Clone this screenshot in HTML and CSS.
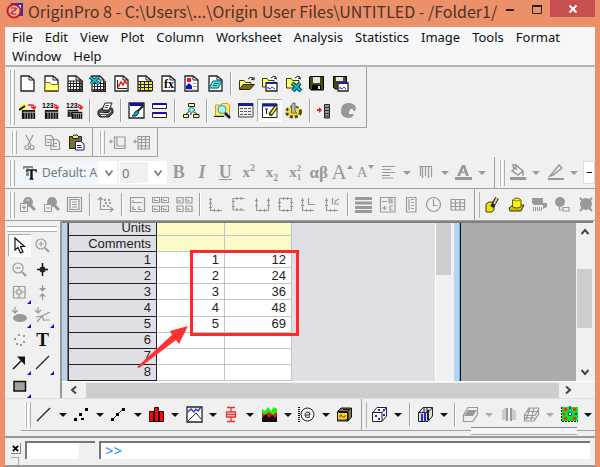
FILE: index.html
```html
<!DOCTYPE html>
<html lang="en">
<head>
<meta charset="utf-8">
<title>OriginPro 8</title>
<link rel="stylesheet" href="styles.css">
</head>
<body>
<svg class="defs" aria-hidden="true">
  <symbol id="doc" viewBox="0 0 17 17"><path class="page" d="M2 1H10L15 5V16H2Z"/><path class="ln" d="M10 1V5H15"/></symbol>
  <symbol id="grid" viewBox="0 0 17 17"><path class="page" d="M2 1H10L15 5V16H2Z"/><path class="ln" d="M10 1V5H15"/><path class="thin" d="M2 8.500H17M2 11.500H17M2 14.500H17M4.500 6V16M7.500 6V16M10.500 6V16M13.500 6V16M16.500 6V16M2 6H17M2 16.500H17"/></symbol>
  <symbol id="folderdoc" viewBox="0 0 17 17"><path class="page" d="M2 1H10L15 5V16H2Z"/><path class="ln" d="M10 1V5H15"/><path fill="#ffff80" stroke="#887000" d="M2 15.500V7.500H7L8.500 9.500H15.500V15.500Z"/></symbol>
  <symbol id="excel" viewBox="0 0 17 17"><path class="page" d="M3 1H11L15 5V16H3Z"/><path class="thin" d="M4 8.500H17M4 11.500H17M4 14.500H17M5.500 7V16M8.500 6V16M11.500 6V16M14.500 6V16M16.500 6V16M4 16.500H17M10 1V5H15"/><path stroke="#003f50" stroke-width="3.500" d="M1 2L10 9M9 2L2 9"/><path stroke="#16bcca" stroke-width="2" d="M1 2L10 9M9 2L2 9"/></symbol>
  <symbol id="graph" viewBox="0 0 17 17"><path class="page" d="M2 1H10L15 5V16H2Z"/><path class="ln" d="M10 1V5H15M4.500 5V13.500H14"/><path fill="none" stroke="#e82020" stroke-width="1.500" d="M5 12L8 7L10 10L12 6L14 9"/></symbol>
  <symbol id="matrix" viewBox="0 0 17 17"><path class="page" d="M2 1H10L15 5V16H2Z"/><path fill="#f8f020" d="M3 6H17V16H3Z"/><path class="ln" d="M10 1V5H15"/><path class="thin" d="M2 6.500H17M2 9.500H17M2 12.500H17M2 15.500H17M4.500 6V16M8.500 6V16M12.500 6V16M16.500 6V16"/></symbol>
  <symbol id="fx" viewBox="0 0 17 17"><path class="page" d="M2 1H10L15 5V16H2Z"/><path class="ln" d="M10 1V5H15"/><text x="4" y="13" font-family="Liberation Serif" font-weight="bold" font-size="12">fx</text></symbol>
  <symbol id="layout" viewBox="0 0 17 17"><path class="page" d="M2 1H10L15 5V16H2Z"/><path class="ln" d="M10 1V5H15"/><path fill="#f01818" d="M4 3H8V7H4Z"/><path fill="#1010c0" d="M3 14V11L6 8L9 11V14Z"/><path class="gray" d="M10 8.500H13M10 11.500H14M4 15H13"/></symbol>
  <symbol id="notes" viewBox="0 0 17 17"><path class="page" d="M2 1H10L15 5V16H2Z"/><path class="ln" d="M10 1V5H15"/><path fill="#60e8e8" stroke="#005860" d="M6 6H15L11 13H2Z"/><path stroke="#005860" d="M7 8.500H12M6 10.500H10"/></symbol>
  <symbol id="open" viewBox="0 0 17 17"><path fill="#ffff90" stroke="#403800" d="M1.500 14V5.500H6L7.500 7.500H13V10"/><path fill="#756c10" stroke="#302c00" d="M1.500 14.500L5 9.500H16.500L12 14.500Z"/><path class="ln" d="M10 4Q13 1 15 3V5M13 4L16 5L16 2"/></symbol>
  <symbol id="opent" viewBox="0 0 17 17"><path fill="#ffff70" stroke="#403800" d="M1.500 12V3.500H6L7.500 5.500H13V12Z"/><path class="page" d="M5 8H16V16H5Z"/><path stroke="#1820b0" stroke-width="2" d="M5 8H16"/><path fill="none" stroke="#4040c0" d="M7 14V12L9 14L11 12L14 14"/><path class="ln" d="M10 3Q13 0 15 2V4M13 3L16 4"/></symbol>
  <symbol id="openx" viewBox="0 0 17 17"><path fill="#ffff70" stroke="#403800" d="M1.500 13V3.500H6L7.500 5.500H14V13Z"/><path stroke="#003840" stroke-width="4" d="M7 8L16 16M15 8L8 16"/><path stroke="#16b8c8" stroke-width="2" d="M7 8L16 16M15 8L8 16"/><path class="ln" d="M10 3Q13 0 15 2V4M13 3L16 4"/></symbol>
  <symbol id="save" viewBox="0 0 17 17"><path fill="#4a4810" stroke="#000" d="M2 1.500H15.500V15H3L1.500 13.500V2Z"/><path fill="#e8e8e8" d="M5 2H12V8H5Z"/><path fill="#000" d="M4 10H13V15H4Z"/><path fill="#ddd" d="M10 11H12V14H10Z"/></symbol>
  <symbol id="savet" viewBox="0 0 17 17"><path fill="#4a4810" stroke="#000" d="M1.500 1.500H14.500V14H3L1.500 12.500Z"/><path fill="#e8e8e8" d="M4 2H11V6H4Z"/><path class="page" d="M6 8H16V16H6Z"/><path stroke="#2020b0" stroke-width="2" d="M6 8H16"/><path fill="none" stroke="#4040d0" d="M8 14V12L10 14L12 12L14 14"/></symbol>
  <symbol id="sheet" viewBox="0 0 17 11"><path fill="#111" d="M1 1H16V11H1Z"/><path stroke="#bbb" d="M2 3.500H16M4.500 3V11M7.500 3V11M10.500 3V11M13.500 3V11"/></symbol>
  <symbol id="wizard" viewBox="0 0 17 17"><use href="#sheet" x="2" y="7" width="15" height="10"/><path fill="#ffff40" d="M4 0L6 3L9 2L7 5L9 8L5 7L2 9L2 5L0 2L3 3Z"/><path stroke="#111" stroke-width="2" d="M0 8L6 4"/><path fill="none" stroke="#f02020" stroke-width="1.500" d="M9 3H13Q15 3 15 6M12 4.500L15 7L17 4.500"/></symbol>
  <symbol id="import" viewBox="0 0 17 17"><use href="#sheet" x="2" y="7" width="15" height="10"/><text x="0" y="6" font-family="Liberation Sans" font-weight="bold" font-size="7">123</text><path fill="none" stroke="#f02020" stroke-width="1.500" d="M12 3H13Q15 3 15 6M12 4.500L15 7L17 4.500"/></symbol>
  <symbol id="importm" viewBox="0 0 17 17"><use href="#sheet" x="1" y="7" width="12" height="8"/><use href="#sheet" x="5" y="9" width="12" height="8"/><text x="0" y="6" font-family="Liberation Sans" font-weight="bold" font-size="7">123</text><path fill="none" stroke="#f02020" stroke-width="1.500" d="M12 3H13Q15 3 15 6M12 4.500L15 7L17 4.500"/></symbol>
  <symbol id="print" viewBox="0 0 17 17"><path fill="#555" stroke="#222" d="M1 9L5 6H15L16 8V11L12 15H3L1 13Z"/><path fill="#fff" stroke="#222" d="M5 8L8 1H15L12 8Z"/><path stroke="#555" d="M8.500 3.500H12M7.500 5.500H11"/><path stroke="#ddd" d="M3 11.500H11L14 9"/><path stroke="#eee" d="M4 13.500H9"/></symbol>
  <symbol id="brush" viewBox="0 0 17 17"><path class="page" d="M1 1H16V16H1Z"/><path stroke="#1010a0" stroke-width="3" d="M2 2.500H15"/><path stroke="#222" stroke-width="2" d="M16 3L9 10"/><path fill="#20a8b8" stroke="#002830" d="M10 8Q12 12 8 14H4Q7 12 7 10Z"/></symbol>
  <symbol id="bars" viewBox="0 0 17 17"><path fill="#fff" stroke="#222" d="M1.500 1.500H15.500V6.500H1.500ZM1.500 10.500H15.500V15.500H1.500Z"/><path stroke="#1010b0" stroke-width="2" d="M2 2H15M2 11H15"/></symbol>
  <symbol id="tree" viewBox="0 0 17 17"><path class="ln" d="M8 4V8L3 12M8 8L14 12M3 12V13M8 9V13"/><path fill="#ffff60" stroke="#222" d="M5.500 1.500H11.500V4.500H5.500ZM.5 12.500H5.500V15.500H.5ZM10.500 12.500H16V15.500H10.500Z"/><path fill="#80f0f0" stroke="#188088" d="M8.500 5L12 8L8.500 11L5 8Z"/></symbol>
  <symbol id="explorer" viewBox="0 0 17 17"><path fill="#ffe860" stroke="#bfa820" d="M1.500 14V3H7L8 1.500H14L15.500 3V14Z"/><path stroke="#111" d="M0 14.500H10"/><circle cx="8" cy="7.500" r="4" fill="#9ff" stroke="#48a"/><path stroke="#101080" stroke-width="2.500" d="M11 11L16 16"/></symbol>
  <symbol id="results" viewBox="0 0 17 17"><path fill="#eee" stroke="#444" d="M1.500 1.500H16V15H1.500Z"/><path stroke="#1818a0" stroke-width="3" d="M1 2.500H16"/><path stroke="#555" stroke-dasharray="3 1" d="M3 6.500H15M3 9.500H15M3 12.500H15"/></symbol>
  <symbol id="editor" viewBox="0 0 17 17"><path fill="#fff" stroke="#222" d="M1.500 2H16V15.500H1.500Z"/><path stroke="#1818a0" stroke-width="3" d="M1 3H16"/><path class="ln" d="M4 7H7M5.500 7V12M8 13H10"/><path stroke="#222" stroke-width="4" d="M15 5L9 13"/><path stroke="#ffe020" stroke-width="2" d="M15 5L10 12"/></symbol>
  <symbol id="gear" viewBox="0 0 17 17"><ellipse cx="8.500" cy="10" rx="7" ry="5" fill="#eadc30" stroke="#554c00" stroke-width="3" stroke-dasharray="3 2"/><ellipse cx="8.500" cy="9" rx="5.500" ry="4" fill="#ece040"/><path fill="#bbb" stroke="#666" d="M6.500 11V4L8 1H10V9L12 11Z"/></symbol>
  <symbol id="addcol" viewBox="0 0 17 17"><path fill="#f02020" d="M0 7H2V5L5 8L2 11V9H0Z"/><path fill="#999" stroke="#222" d="M7.500 2.500H12.500V16H7.500Z"/><path stroke="#333" d="M7 5.500H13M7 8.500H13M7 11.500H13M7 14H13"/></symbol>
  <symbol id="refresh" viewBox="0 0 17 17"><path fill="#999" d="M9 9H15L16 6C15 2 12 1 8 1C3 1 1 5 1 9C1 14 5 16 8 16C11 16 13 15 14 12L9 12Z"/><path fill="#f0f0f0" d="M10 7H13V10H10Z"/></symbol>
  <symbol id="cut" viewBox="0 0 17 17"><path class="gray" d="M5 1L10 11M12 1L7 11"/><circle class="gray" cx="6" cy="13.500" r="2"/><circle class="gray" cx="11" cy="13.500" r="2"/></symbol>
  <symbol id="copy" viewBox="0 0 17 17"><path class="gray" d="M1.500 1.500H7L9.500 4V11.500H1.500ZM7 5.500H13L15.500 8V15.500H7ZM3 5.500H6M3 8.500H6M9 9.500H13M9 12.500H13"/></symbol>
  <symbol id="paste" viewBox="0 0 17 17"><path fill="#77722c" stroke="#222" d="M1.500 2.500H13.500V14.500H1.500Z"/><path fill="#f4e660" stroke="#222" d="M4.500 4.500V2.500L6 1H9L10.500 2.500V4.500Z"/><path fill="#fff" stroke="#181890" d="M7.500 7.500H13L16 10V16H7.500Z"/><path stroke="#181890" d="M9 11.500H13M9 13.500H14"/></symbol>
  <symbol id="addlayer" viewBox="0 0 17 17"><path class="gray" d="M0 7.500H4M2 5.500V9.500M5.500 3V14.500H16V3ZM8 3V12H16"/></symbol>
  <symbol id="addtable" viewBox="0 0 17 17"><path class="gray" d="M0 7.500H4M2 5.500V9.500M5 2.500H16.500V15H5ZM5 5.500H16M5 8.500H16M5 12H16M8.500 2V15M12.500 2V15"/></symbol>
  <symbol id="tt" viewBox="0 0 17 17"><path fill="#888" d="M2 2H12V5H11L10 4H8V12H5V4H4L3 5H2Z"/><path fill="#111" stroke="#f0f6fc" stroke-width=".6" d="M5 5H16V9H15L14 7H12V14L13 15V16H8V15L9 14V7H7L6 9H5Z"/></symbol>
  <symbol id="chev" viewBox="0 0 10 10"><path fill="none" stroke="#888" stroke-width="2" d="M1.500 2.500L5 7L8.500 2.500"/></symbol>
  <symbol id="drop" viewBox="0 0 8 8"><path fill="currentColor" d="M0 2H8L4 6Z"/></symbol>
  <symbol id="align" viewBox="0 0 17 17"><path class="gray" d="M2 2.500H15M2 5.500H11M2 8.500H15M2 11.500H10M2 14H13"/></symbol>
  <symbol id="hatch" viewBox="0 0 17 17"><path class="gray" d="M2 2.500H15M3.500 2V12M5.500 2V14M8.500 2V12M11.500 2V14M14.500 2V13"/></symbol>
  <symbol id="fontcolor" viewBox="0 0 17 17"><path fill="#999" fill-rule="evenodd" d="M0 13H17V16H0ZM7 1H10L14 12H11L10 9H6L5 12H2ZM8.500 4L7 7.500H9.500Z"/></symbol>
  <symbol id="bucket" viewBox="0 0 17 17"><path fill="#999" d="M1 13H17V16H1Z"/><path fill="none" stroke="#999" stroke-width="1.500" d="M3 7L8 2L14 7L9 11ZM5 5L4 1H7V6M14 7V12"/></symbol>
  <symbol id="pen" viewBox="0 0 17 17"><path fill="#999" d="M1 14H17V16H1Z"/><path fill="none" stroke="#999" stroke-width="1.500" d="M3 12L12 1L15 4L6 11Z"/></symbol>
  <symbol id="zoomin" viewBox="0 0 17 17"><circle cx="9" cy="6" r="5" fill="#999"/><path stroke="#999" stroke-width="3" d="M11 9L16 14"/><path fill="#eee" stroke="#999" d="M1.500 7.500H8.500V15.500H1.500ZM3 11.500H7M5 9V14"/><path stroke="#ddd" d="M7 4H11"/></symbol>
  <symbol id="zoomout" viewBox="0 0 17 17"><circle cx="9" cy="6" r="5" fill="#999"/><path stroke="#999" stroke-width="3" d="M11 9L16 14"/><path fill="#eee" stroke="#999" d="M1.500 8.500H8.500V15.500H1.500ZM3 12H7"/></symbol>
  <symbol id="page" viewBox="0 0 17 17"><path class="gray" d="M1.500 1.500H15.500V15.500H1.500ZM4 3.500H13V13.500H4ZM6 6H11M6 8.500H11M6 11H11"/></symbol>
  <symbol id="rescale" viewBox="0 0 17 17"><path class="gray" d="M3.500 2V13.500H16M1 4L3.500 1.500L6 4M13 11L16 13.500L13 16"/><path stroke="#999" stroke-width="2" stroke-dasharray="2 2" d="M7 4H15M8 7H16M6 10H13"/></symbol>
  <symbol id="lay1" viewBox="0 0 17 17"><path class="gray" d="M1.500 1.500H15.500V15.500H1.500ZM4 4V6.500H13M4 10V13.500H7M10 10V13.500H13"/></symbol>
  <symbol id="lay4" viewBox="0 0 17 17"><path class="gray" d="M.5 1.500H7.500V6.500H.5ZM9.500 1.500H16.500V6.500H9.500ZM.5 10H7.500V15.500H.5ZM9.500 10H16.500V15.500H9.500ZM2.500 3V4.500H6M11.500 3V4.500H15M2.500 12V13.500H6M11.500 12V13.500H15"/></symbol>
  <symbol id="lay6" viewBox="0 0 17 17"><path class="gray" d="M1 1.500H7V7H1ZM10 1.500H16V7H10ZM1 10H7V15.500H1ZM10 10H16V15.500H10ZM3 3.500V5H5M12 3.500V5H14M3 12V13.500H5M12 12V13.500H14"/></symbol>
  <symbol id="axL" viewBox="0 0 17 17"><path class="gray" d="M3.500 2V14.500H15M2 3.500H5M2 7.500H5M2 11.500H5M7.500 13V16M11.500 13V16"/></symbol>
  <symbol id="axC" viewBox="0 0 17 17"><path class="gray" d="M15 2.500H3V14H15M2 5.500H5M2 10.500H5M7 1V4M11 1V4M7 12V15M11 12V15"/></symbol>
  <symbol id="axU" viewBox="0 0 17 17"><path class="gray" d="M2.500 2V14.500H14.500V2M1 4.500H4M1 9.500H4M13 4.500H16M13 9.500H16M6.500 13V16M10.500 13V16"/></symbol>
  <symbol id="axO" viewBox="0 0 17 17"><path class="gray" d="M2.500 2.500H14.500V14.500H2.500ZM1 6.500H4M1 10.500H4M13 6.500H16M13 10.500H16M6.500 13V16M10.500 13V16M6.500 1V4M10.500 1V4"/></symbol>
  <symbol id="axI" viewBox="0 0 17 17"><path class="gray" d="M2.500 2V14.500H14M1 4.500H4M1 9.500H4M6.500 13V16M10.500 13V16M8.500 2V8.500H15"/></symbol>
  <symbol id="axJ" viewBox="0 0 17 17"><path class="gray" d="M2.500 2V14.500H14M1 4.500H4M1 9.500H4M6.500 13V16M10.500 13V16M8.500 2V8.500M15 3L11 5V8H15"/></symbol>
  <symbol id="legend" viewBox="0 0 17 17"><path stroke="#999" stroke-width="3" d="M0 2.500H17M0 7H17M0 11.500H17M0 15.500H17"/></symbol>
  <symbol id="bc" viewBox="0 0 17 17"><path class="gray" d="M1.500 1.500H16V16H1.500ZM3 5.500H8M3 12H8M5.500 10V14M10 3H13V7H10ZM10 5H13M14 10H11V14H14"/></symbol>
  <symbol id="scalebar" viewBox="0 0 17 17"><path class="gray" d="M4.500 1.500H14V16H4.500ZM7 3V14M9 3.500H12M9 6.500H12M9 9.500H12M9 12.500H12"/></symbol>
  <symbol id="clock" viewBox="0 0 17 17"><circle class="gray" cx="8.500" cy="8.500" r="7"/><path class="gray" d="M8.500 3.500V9.500H12"/></symbol>
  <symbol id="table" viewBox="0 0 17 17"><path class="gray" d="M2 3.500H15.500V14H2ZM2 7H15M2 10.500H15M6.500 3V14M11 3V14"/></symbol>
  <symbol id="ycyl" viewBox="0 0 17 17"><path fill="#e8e010" stroke="#444000" d="M2 8L5 6H10V14L8 16H2Z"/><path stroke="#222" stroke-width="4" d="M13 2L8 11"/><path stroke="#f0c090" stroke-width="2" d="M13 2L10 8"/></symbol>
  <symbol id="ybox" viewBox="0 0 17 17"><path fill="#c8b808" stroke="#333" d="M1 12L5 9H16L13 15H2Z"/><path fill="#f8f020" stroke="#665c00" d="M4.500 4V11Q9 13 13 11V4Q9 0 4.500 4Z"/><path fill="none" stroke="#998c00" d="M4.500 4Q9 6 13 4"/></symbol>
  <symbol id="gshape" viewBox="0 0 17 17"><path fill="#999" d="M1 2H12V7H16V11L12 13V9H3L1 7Z"/><path stroke="#999" stroke-dasharray="1 1" stroke-width="4" d="M2 13H12"/></symbol>
  <symbol id="gtree" viewBox="0 0 17 17"><circle cx="6" cy="6" r="5" fill="#999"/><path class="gray" d="M5.500 9V14H8M9 11.500H15V15H9Z"/></symbol>
  <symbol id="gclock" viewBox="0 0 17 17"><circle cx="8" cy="8" r="6" fill="#999"/><path stroke="#999" stroke-width="2" d="M2 2L14 15M14 2L2 15"/></symbol>
  <symbol id="pointer" viewBox="0 0 17 17"><path fill="#fff" stroke="#111" stroke-width="1.200" d="M4 1V13L7 10.500L9.500 16L12 15L9.500 9.500H13.500Z"/></symbol>
  <symbol id="magp" viewBox="0 0 17 17"><circle class="gray" cx="7" cy="7" r="5"/><path class="gray" d="M4.500 7H9.500M7 4.500V9.500"/><path stroke="#999" stroke-width="2" d="M11 11L15 15"/></symbol>
  <symbol id="magm" viewBox="0 0 17 17"><circle class="gray" cx="7" cy="7" r="5"/><path class="gray" d="M4.500 7H9.500"/><path stroke="#999" stroke-width="2" d="M11 11L15 15"/></symbol>
  <symbol id="cross" viewBox="0 0 17 17"><path stroke="#111" stroke-width="1.500" d="M8.500 2V15M3 8.500H14"/><circle cx="8.500" cy="8.500" r="3" fill="#222"/></symbol>
  <symbol id="reader" viewBox="0 0 17 17"><path class="gray" d="M2.500 2.500H14V14H2.500ZM8 2V6M8 10V14M2 8H6M10 8H14M6 6H10V10H6Z"/></symbol>
  <symbol id="updn" viewBox="0 0 17 17"><path class="gray" d="M8.500 1V6M8.500 11V16"/><path fill="#999" d="M5 4H12L8.500 7.500ZM5 12.500H12L8.500 9Z"/></symbol>
  <symbol id="mask" viewBox="0 0 17 17"><ellipse cx="9" cy="11" rx="7" ry="4" fill="#999"/><path class="gray" d="M4 0V5M1 3L4 6L7 3"/></symbol>
  <symbol id="maskline" viewBox="0 0 17 17"><path class="gray" d="M4 0V5M1 3L4 6L7 3M3 15L8 9L16 5M10 13H16M2 10L8 9L10 14"/></symbol>
  <symbol id="dots" viewBox="0 0 17 17"><path fill="#999" d="M7 3H9V5H7ZM12 4H14V6H12ZM3 7H5V9H3ZM12 10H14V12H12ZM5 12H7V14H5ZM9 13H11V15H9Z"/></symbol>
  <symbol id="arrow" viewBox="0 0 17 17"><path stroke="#111" stroke-width="1.500" d="M2 15L11 6"/><path fill="#111" d="M6 2.500H14V11Z"/></symbol>
  <symbol id="line" viewBox="0 0 17 17"><path stroke="#222" stroke-width="1.300" d="M2 15L15 2"/></symbol>
  <symbol id="rect" viewBox="0 0 17 17"><path fill="#a0a0a0" stroke="#111" stroke-width="1.500" d="M3 3.500H14.500V13H3Z"/></symbol>
  <symbol id="scatter" viewBox="0 0 17 17"><path fill="#000" d="M1 12H4V15H1ZM6 7H9V10H6ZM8 12H11V14H8ZM12 2H15V5H12Z"/></symbol>
  <symbol id="lsym" viewBox="0 0 17 17"><path stroke="#222" d="M2 14L14 2"/><path fill="#000" d="M1 12H4V15H1ZM6 7H9V10H6ZM12 2H15V5H12Z"/></symbol>
  <symbol id="column" viewBox="0 0 17 17"><path fill="#e81010" stroke="#400" d="M1.500 5.500H6V15.500H1.500ZM6.500 1.500H10.500V15.500H6.500ZM11 5.500H15.500V15.500H11Z"/><path stroke="#200" stroke-width="1.500" d="M6 5V16M11 5V16"/></symbol>
  <symbol id="multi" viewBox="0 0 17 17"><path class="page" d="M1 1H16V16H1Z"/><path fill="none" stroke="#2030e0" stroke-width="1.300" d="M2 6L5 3L8 6L10 3L12 5L15 1"/><path class="ln" d="M2 15L10 7L15 13"/></symbol>
  <symbol id="box" viewBox="0 0 17 17"><path fill="none" stroke="#e83030" stroke-width="1.300" d="M4 1.500H12M8 1V6M3.500 6H12.500V11H3.500ZM3 8.500H13M8 11V15.500M4 15.500H12"/></symbol>
  <symbol id="area" viewBox="0 0 17 17"><path fill="#18f018" d="M1 3L4 5L7 1L10 5L13 1L16 3V16H1Z"/><path fill="#e81010" d="M1 7L4 9L8 6L12 9L16 6V16H1Z"/><path fill="#111" d="M1 12L5 8L8 12L11 9L14 12L16 10V16H1Z"/></symbol>
  <symbol id="polar" viewBox="0 0 17 17"><path stroke="#111" stroke-width="2" stroke-dasharray="1 1" d="M1 1V16"/><circle class="ln" cx="9.500" cy="8.500" r="6.500"/><path class="ln" d="M8 9H12Q12 5.500 9 6Q6.500 7 7 10Q8 12.500 12 11"/></symbol>
  <symbol id="template" viewBox="0 0 17 17"><path fill="#80783c" stroke="#111" d="M1.500 5.500L5 2H15.500V11L12 15H1.500Z"/><path stroke="#111" d="M2 5.500H12V15M12 5L15 2M7 3.500H14"/><path fill="#f0e820" d="M2 7H11V13H2Z"/><path fill="none" stroke="#d02020" d="M4 12V9H6V11H9V9"/></symbol>
  <symbol id="cube" viewBox="0 0 17 17"><path fill="#fff" stroke="#222" d="M1.500 7L6 1.500H15.500V10L11 15.500H1.500Z"/><path class="ln" d="M1 6.500H11V15M11 6.500L15.500 1.500"/><path fill="#2020e0" d="M4 9H6V11H4ZM7 3H9V5H7ZM12 8H14V10H12ZM7 12H9V14H7ZM12 3H14V5H12Z"/></symbol>
  <symbol id="cubebar" viewBox="0 0 17 17"><path fill="#ddd" stroke="#222" d="M1.500 7L6 1.500H15.500V10L11 15.500H1.500Z"/><path class="ln" d="M1 6.500H11V15M11 6.500L15.500 1.500M7 2V7M10 2V7"/><path fill="#2428d8" d="M4 8H6V15H4ZM7 6H9V15H7Z"/><path fill="#222" d="M10 4H12V14H10Z"/></symbol>
  <symbol id="gcube" viewBox="0 0 17 17"><path class="gray" d="M1.500 9L6 1.500H15.500V8L11 15.500H1.500Z"/><path fill="#999" d="M3 8L6 4H15L11 10H2Z"/></symbol>
  <symbol id="gwall" viewBox="0 0 17 17"><path fill="#ccc" d="M2 4L7 1V14H2ZM12 2L16 5V14H12Z"/><path stroke="#999" stroke-width="2" d="M7 2V15M11 2V15"/></symbol>
  <symbol id="gmesh" viewBox="0 0 17 17"><path class="gray" d="M1.500 9L6 2H15.500V8L11 15H1.500ZM4 5.500H14M2 9.500H12L15 4M7 2L3 14M11 2L8 14M2 12H12"/></symbol>
  <symbol id="contour" viewBox="0 0 17 17"><path fill="#10e020" d="M1 1H17V15H1Z"/><path fill="#f03020" d="M3 2H6V5H3ZM12 2H15V5H12ZM3 11H6V14H3ZM12 11H15V14H12ZM2 7H4V9H2Z"/><path fill="#d8ffff" stroke="#1030e0" d="M9 6L11 8L9 10L7 8ZM9 0L10 2L9 3L8 2ZM15 7L16 8L15 9L14 8Z"/><path stroke="#111" stroke-dasharray="2 1" d="M.5 1V16M1 15.500H17"/></symbol>
</svg>

<div class="window">
  <header class="titlebar">
    <svg class="logo" viewBox="0 0 18 18"><path fill="#fff" stroke="#2038c8" stroke-width="2" d="M6 2H16V13H6Z"/><circle cx="8" cy="9" r="6.500" fill="#f4b0a0" fill-opacity=".9" stroke="#c81820" stroke-width="2"/><path fill="none" stroke="#b01820" d="M4 12L11 6M5 6H10V8L6 10V12H10"/></svg>
    <h1>OriginPro 8 - C:\Users\...\Origin User Files\UNTITLED - /Folder1/</h1>
    <div class="winbtns">
      <button aria-label="Minimize"><svg viewBox="0 0 12 12"><path fill="#222" d="M2 6H10V8H2Z"/></svg></button>
      <button aria-label="Maximize"><svg viewBox="0 0 12 12"><path fill="none" stroke="#222" d="M1.500 3H10.500V10.500H1.500Z"/><path fill="#222" d="M1 2H11V4H1Z"/></svg></button>
      <button class="close" aria-label="Close"><svg viewBox="0 0 12 12"><path stroke="#fff" stroke-width="2" d="M2.500 2.500L9.500 9.500M9.500 2.500L2.500 9.500"/></svg></button>
    </div>
  </header>

  <main class="client">
    <nav class="menu">
      <a href="#">File</a><a href="#">Edit</a><a href="#">View</a><a href="#">Plot</a><a href="#">Column</a><a href="#">Worksheet</a><a href="#">Analysis</a><a href="#">Statistics</a><a href="#">Image</a><a href="#">Tools</a><a href="#">Format</a><i class="break"></i><a href="#">Window</a><a href="#">Help</a>
    </nav>

    <div class="dock">
      <section class="bar standard">
        <i class="grip"></i>
        <div class="rows">
          <div class="row std1">
            <button aria-label="New project"><svg><use href="#doc"/></svg></button>
            <button aria-label="New folder"><svg><use href="#folderdoc"/></svg></button>
            <button aria-label="New worksheet"><svg><use href="#grid"/></svg></button>
            <button aria-label="New Excel"><svg><use href="#excel"/></svg></button>
            <button aria-label="New graph"><svg><use href="#graph"/></svg></button>
            <button aria-label="New matrix"><svg><use href="#matrix"/></svg></button>
            <button aria-label="New function"><svg><use href="#fx"/></svg></button>
            <button aria-label="New layout"><svg><use href="#layout"/></svg></button>
            <button aria-label="New notes"><svg><use href="#notes"/></svg></button>
            <i class="sep"></i>
            <button aria-label="Open"><svg><use href="#open"/></svg></button>
            <button aria-label="Open template"><svg><use href="#opent"/></svg></button>
            <button aria-label="Open Excel"><svg><use href="#openx"/></svg></button>
            <button aria-label="Save"><svg><use href="#save"/></svg></button>
            <button aria-label="Save template"><svg><use href="#savet"/></svg></button>
          </div>
          <div class="row std2">
            <button aria-label="Import wizard"><svg><use href="#wizard"/></svg></button>
            <button aria-label="Import single"><svg><use href="#import"/></svg></button>
            <button aria-label="Import multiple"><svg><use href="#importm"/></svg></button>
            <i class="sep"></i>
            <button aria-label="Print"><svg><use href="#print"/></svg></button>
            <i class="sep"></i>
            <button aria-label="Redraw"><svg><use href="#brush"/></svg></button>
            <button aria-label="Duplicate"><svg><use href="#bars"/></svg></button>
            <i class="sep"></i>
            <button aria-label="Custom routine"><svg><use href="#tree"/></svg></button>
            <i class="sep"></i>
            <button aria-label="Project explorer"><svg><use href="#explorer"/></svg></button>
            <button aria-label="Results log"><svg><use href="#results"/></svg></button>
            <button class="pressed" aria-label="Command window"><svg><use href="#editor"/></svg></button>
            <button aria-label="Code builder"><svg><use href="#gear"/></svg></button>
            <i class="sep"></i>
            <button aria-label="Add column"><svg><use href="#addcol"/></svg></button>
            <button aria-label="Recalculate"><svg><use href="#refresh"/></svg></button>
          </div>
        </div>
      </section>
    </div>

    <div class="dock">
      <section class="bar edit">
        <i class="grip"></i>
        <div class="row ed1">
          <button aria-label="Cut"><svg><use href="#cut"/></svg></button>
          <button aria-label="Copy"><svg><use href="#copy"/></svg></button>
          <button aria-label="Paste"><svg><use href="#paste"/></svg></button>
        </div>
      </section>
      <section class="bar edit">
        <i class="grip"></i>
        <div class="row ed2">
          <button aria-label="Add layer"><svg><use href="#addlayer"/></svg></button>
          <button aria-label="Add table"><svg><use href="#addtable"/></svg></button>
        </div>
      </section>
    </div>

    <div class="dock">
      <section class="bar tall">
        <i class="grip"></i>
        <button class="combo font" aria-label="Font"><svg><use href="#tt"/></svg><span>Default: A</span><svg class="chev"><use href="#chev"/></svg></button>
        <button class="combo size" aria-label="Font size"><span>0</span><svg class="chev"><use href="#chev"/></svg></button>
        <div class="row fmt">
          <button><b>B</b></button><button><em>I</em></button><button><u>U</u></button>
          <button><span>x<sup>2</sup></span></button><button><span>x<sub>2</sub></span></button>
          <button><span>x</span><span class="stack"><span>2</span><span>1</span></span></button>
          <button class="greek"><span>αβ</span></button>
          <button class="big" aria-label="Increase font"><span>A</span><svg viewBox="0 0 6 6"><path fill="#999" d="M0 5H6L3 1Z"/></svg></button>
          <button class="small" aria-label="Decrease font"><span>A</span><svg viewBox="0 0 6 6"><path fill="#999" d="M0 1H6L3 5Z"/></svg></button>
          <button aria-label="Align"><svg><use href="#align"/></svg></button><button class="dd" aria-label="Align options"><svg><use href="#drop"/></svg></button>
          <button aria-label="Pattern"><svg><use href="#hatch"/></svg></button><button class="dd" aria-label="Pattern options"><svg><use href="#drop"/></svg></button>
          <button aria-label="Font color"><svg><use href="#fontcolor"/></svg></button><button class="dd" aria-label="Font color options"><svg><use href="#drop"/></svg></button>
        </div>
      </section>
      <section class="bar tall rest">
        <i class="grip"></i>
        <div class="row style">
          <button aria-label="Fill color"><svg><use href="#bucket"/></svg></button><button class="dd" aria-label="Fill options"><svg><use href="#drop"/></svg></button>
          <button aria-label="Line color"><svg><use href="#pen"/></svg></button><button class="dd" aria-label="Line options"><svg><use href="#drop"/></svg></button>
        </div>
        <button class="combo stroke" aria-label="Line style"><i></i></button>
      </section>
    </div>

    <div class="dock">
      <section class="bar tall">
        <i class="grip"></i>
        <div class="row grf">
          <button aria-label="Zoom in"><svg><use href="#zoomin"/></svg></button>
          <button aria-label="Zoom out"><svg><use href="#zoomout"/></svg></button>
          <button aria-label="Whole page"><svg><use href="#page"/></svg></button>
          <i class="sep"></i>
          <button aria-label="Rescale"><svg><use href="#rescale"/></svg></button>
          <i class="sep"></i>
          <button aria-label="Extract to layers"><svg><use href="#lay1"/></svg></button>
          <button aria-label="Extract to graphs"><svg><use href="#lay4"/></svg></button>
          <button aria-label="Merge"><svg><use href="#lay6"/></svg></button>
          <i class="sep"></i>
          <button aria-label="Bottom left axes"><svg><use href="#axL"/></svg></button>
          <button aria-label="Top axes"><svg><use href="#axC"/></svg></button>
          <button aria-label="Right axes"><svg><use href="#axU"/></svg></button>
          <button aria-label="Four axes"><svg><use href="#axO"/></svg></button>
          <button aria-label="Inset"><svg><use href="#axI"/></svg></button>
          <button aria-label="Inset with data"><svg><use href="#axJ"/></svg></button>
          <i class="sep"></i>
          <button aria-label="Color scale"><svg><use href="#legend"/></svg></button>
          <button aria-label="Legend"><svg><use href="#bc"/></svg></button>
          <button aria-label="Scale"><svg><use href="#scalebar"/></svg></button>
          <button aria-label="Date and time"><svg><use href="#clock"/></svg></button>
          <button aria-label="Table"><svg><use href="#table"/></svg></button>
        </div>
      </section>
      <section class="bar tall rest">
        <i class="grip"></i>
        <div class="row obj">
          <button aria-label="Edit object"><svg><use href="#ycyl"/></svg></button>
          <button aria-label="Add object"><svg><use href="#ybox"/></svg></button>
          <button aria-label="Front"><svg><use href="#gshape"/></svg></button>
          <button aria-label="Group"><svg><use href="#gtree"/></svg></button>
          <button aria-label="Ungroup"><svg><use href="#gclock"/></svg></button>
        </div>
      </section>
    </div>

    <div class="work">
      <aside class="tools">
        <i class="hgrip"></i>
        <div class="toolgrid">
          <button class="pressed" aria-label="Pointer"><svg><use href="#pointer"/></svg></button>
          <button aria-label="Zoom in"><svg><use href="#magp"/></svg></button>
          <button aria-label="Zoom out"><svg><use href="#magm"/></svg></button>
          <button aria-label="Screen reader"><svg><use href="#cross"/></svg></button>
          <button class="more" aria-label="Data reader"><svg><use href="#reader"/></svg></button>
          <button aria-label="Data selector"><svg><use href="#updn"/></svg></button>
          <button class="more" aria-label="Mask"><svg><use href="#mask"/></svg></button>
          <button class="more" aria-label="Mask line"><svg><use href="#maskline"/></svg></button>
          <button aria-label="Draw data"><svg><use href="#dots"/></svg></button>
          <button class="texttool">T</button>
          <button class="more" aria-label="Arrow"><svg><use href="#arrow"/></svg></button>
          <button class="more" aria-label="Line"><svg><use href="#line"/></svg></button>
          <button class="more" aria-label="Rectangle"><svg><use href="#rect"/></svg></button>
        </div>
      </aside>
      <div class="mdi">
        <div class="mdirow">
          <div class="book">
            <div class="sheet">
              <table>
                <tbody>
                  <tr class="meta"><th scope="row">Units</th><td></td><td></td></tr>
                  <tr class="meta"><th scope="row">Comments</th><td></td><td></td></tr>
                  <tr><th scope="row">1</th><td>1</td><td>12</td></tr>
                  <tr><th scope="row">2</th><td>2</td><td>24</td></tr>
                  <tr><th scope="row">3</th><td>3</td><td>36</td></tr>
                  <tr><th scope="row">4</th><td>4</td><td>48</td></tr>
                  <tr><th scope="row">5</th><td>5</td><td>69</td></tr>
                  <tr><th scope="row">6</th><td></td><td></td></tr>
                  <tr><th scope="row">7</th><td></td><td></td></tr>
                  <tr><th scope="row">8</th><td></td><td></td></tr>
                </tbody>
              </table>
              <div class="mark"></div>
              <svg class="pointer" viewBox="0 0 52 44"><path fill="#ff3030" d="M0 42L35 10L33 6L51 1L42 19L39 15L2 43Z"/></svg>
            </div>
            <div class="vscroll inner"><i></i></div>
          </div>
          <div class="desk"></div>
          <div class="vscroll outer">
            <button aria-label="Scroll up"><svg viewBox="0 0 10 10"><path class="sc" d="M1.500 7L5 3L8.500 7"/></svg></button>
            <i></i>
            <button aria-label="Scroll down"><svg viewBox="0 0 10 10"><path class="sc" d="M1.500 3L5 7L8.500 3"/></svg></button>
          </div>
        </div>
        <div class="hscroll">
          <button aria-label="Scroll left"><svg viewBox="0 0 10 10"><path class="sc" d="M7 1.500L3 5L7 8.500"/></svg></button>
          <i></i>
          <button aria-label="Scroll right"><svg viewBox="0 0 10 10"><path class="sc" d="M3 1.500L7 5L3 8.500"/></svg></button>
        </div>
      </div>
    </div>

    <div class="dock plots">
      <section class="bar tall">
        <i class="grip"></i>
        <div class="row plot1">
          <button aria-label="Line plot"><svg><use href="#line"/></svg></button><button class="dd" aria-label="Line plots"><svg><use href="#drop"/></svg></button>
          <button aria-label="Scatter"><svg><use href="#scatter"/></svg></button><button class="dd" aria-label="Scatter plots"><svg><use href="#drop"/></svg></button>
          <button aria-label="Line and symbol"><svg><use href="#lsym"/></svg></button><button class="dd" aria-label="Line and symbol plots"><svg><use href="#drop"/></svg></button>
          <button aria-label="Column"><svg><use href="#column"/></svg></button><button class="dd" aria-label="Column plots"><svg><use href="#drop"/></svg></button>
          <button aria-label="Multi panel"><svg><use href="#multi"/></svg></button><button class="dd" aria-label="Multi panel plots"><svg><use href="#drop"/></svg></button>
          <button aria-label="Box"><svg><use href="#box"/></svg></button><button class="dd" aria-label="Box plots"><svg><use href="#drop"/></svg></button>
          <button aria-label="Area"><svg><use href="#area"/></svg></button><button class="dd" aria-label="Area plots"><svg><use href="#drop"/></svg></button>
          <button aria-label="Polar"><svg><use href="#polar"/></svg></button><button class="dd" aria-label="Polar plots"><svg><use href="#drop"/></svg></button>
          <button aria-label="Template library"><svg><use href="#template"/></svg></button>
        </div>
      </section>
      <section class="bar tall rest">
        <i class="grip"></i>
        <div class="row plot2">
          <button aria-label="3D scatter"><svg><use href="#cube"/></svg></button><button class="dd" aria-label="3D scatter plots"><svg><use href="#drop"/></svg></button>
          <i class="sep"></i>
          <button aria-label="3D bars"><svg><use href="#cubebar"/></svg></button><button class="dd" aria-label="3D bar plots"><svg><use href="#drop"/></svg></button>
          <i class="sep"></i>
          <button aria-label="3D surface"><svg><use href="#gcube"/></svg></button><button class="dd off" aria-label="3D surface plots"><svg><use href="#drop"/></svg></button>
          <button aria-label="3D walls"><svg><use href="#gwall"/></svg></button>
          <button aria-label="3D wire frame"><svg><use href="#gmesh"/></svg></button><button class="dd off" aria-label="3D wire plots"><svg><use href="#drop"/></svg></button>
          <button aria-label="Contour"><svg><use href="#contour"/></svg></button><button class="dd" aria-label="Contour plots"><svg><use href="#drop"/></svg></button>
        </div>
      </section>
      <i class="ghost"></i>
    </div>

    <footer class="command">
      <div class="ctl"><button aria-label="Close command window"><svg viewBox="0 0 8 8"><path stroke="#000" stroke-width="2" d="M1 1L7 7M7 1L1 7"/></svg></button><i></i></div>
      <select aria-label="History"><option></option></select>
      <div class="prompt"><label for="cmd">&gt;&gt;</label><input id="cmd" type="text"></div>
    </footer>
  </main>
</div>
</body>
</html>
```
FILE: styles.css
```css
* { box-sizing: border-box; }
body { margin: 0; font-family: "Noto Sans", "Open Sans", sans-serif; font-size: 13px; color: #222; }
button { border: 0; padding: 0; margin: 0; background: none; font: inherit; color: inherit; display: flex; align-items: center; justify-content: center; }
i { font-style: normal; }
.defs { display: none; }
.page { fill: #fff; stroke: #222; stroke-width: 1.3; }
.ln { fill: none; stroke: #222; }
.thin { fill: none; stroke: #222; stroke-width: 1; }
.gray { fill: none; stroke: #999; stroke-width: 1.2; }
.sc { fill: none; stroke: #444; stroke-width: 2; }

.window { display: flex; flex-direction: column; min-height: 100vh; background: #eb9069; padding: 0 5px 2px; overflow: hidden; }
.titlebar { display: flex; align-items: flex-start; height: 27px; }
.logo { flex: none; width: 18px; height: 18px; margin: 2px 4px 0 1px; }
h1 { flex: 1; min-width: 0; margin: 0; font: 400 16px/23px "Noto Sans CJK SC", "Noto Sans", sans-serif; color: #4a3428; white-space: nowrap; }
.winbtns { display: flex; flex: none; }
.winbtns button { width: 27px; height: 17px; }
.winbtns svg { width: 12px; height: 12px; }
.winbtns .close { width: 45px; background: #c75050; }

.client { flex: 1; display: flex; flex-direction: column; background: #f0f0f0; border-bottom: 2px solid #999; }
.menu { display: flex; flex-wrap: wrap; column-gap: 12px; background: #f5f6f7; padding: 1px 7px 0; height: 40px; border-bottom: 2px solid #b4b4b4; }
.menu a { color: #111; text-decoration: none; line-height: 19px; font-size: 13px; }
.break { flex-basis: 100%; }

.dock { display: flex; overflow: hidden; }
.bar { display: flex; align-items: center; border-right: 1px solid #a0a0a0; border-bottom: 1px solid #a0a0a0; flex: none; padding-right: 5px; }
.bar .grip { align-self: stretch; width: 6px; margin: 3px 1px 2px 4px; border-right: 1px solid #b0b0b0; background: linear-gradient(90deg, #fff 1px, #b0b0b0 1px 2px, #fff 2px 4px, #f0f0f0 4px); }
.rest { flex: 1; border-right: 0; padding-right: 0; overflow: hidden; min-width: 0; }
.standard { height: 61px; width: 362px; }
.edit { height: 29px; padding-right: 4px; }
.edit .grip { margin-left: 6px; }
.tall { height: 32px; }
.row { display: flex; align-items: center; height: 27px; flex: none; }
.row button { flex: 5 1 0; min-width: 0; height: 23px; }
.row .dd { flex: 3 1 0; color: #999; }
.row svg { width: 17px; height: 17px; flex: none; }
.row .dd svg { width: 8px; height: 8px; }
.sep { flex: none; width: 2px; margin: 0 3px; height: 23px; border-left: 1px solid #a0a0a0; background: #fff; }
.pressed { background: #fafafa; border: 1px solid #aaa; border-right-color: #fff; border-bottom-color: #fff; }
.std1 { width: 336px; }
.std2 { width: 344px; }
.ed1 { width: 70px; }
.ed2 { width: 47px; }
.fmt { width: 322px; color: #999; font-family: "Liberation Serif", serif; font-weight: 700; font-size: 15px; }
.fmt em { font-weight: 700; }
.fmt b, .fmt em, .fmt u { font-size: 18px; }
.fmt sup, .fmt sub { font-size: 10px; line-height: 0; }
.stack { display: flex; flex-direction: column; font-size: 9px; line-height: 9px; }
.greek { font-size: 17px; }
.big span { font-size: 21px; font-weight: 400; }
.small span { font-size: 15px; font-weight: 400; }
.fmt .big svg, .fmt .small svg { width: 6px; height: 6px; align-self: flex-start; margin-top: 3px; }
.style { width: 75px; }
.grf { width: 453px; }
.obj { width: 117px; }
.combo { height: 23px; background: #fff; color: #777; font-size: 13px; justify-content: flex-start; flex: none; }
.combo svg { width: 17px; height: 17px; flex: none; }
.combo .chev { width: 10px; height: 10px; margin: 0 3px 0 auto; }
.font { width: 101px; margin-right: 2px; padding-left: 5px; background: linear-gradient(90deg, #f0f6fc 82px, #fff 82px); }
.font span { margin-left: 4px; white-space: nowrap; font-size: 12px; }
.size { width: 48px; padding-left: 2px; background: linear-gradient(90deg, #f0f0f0 28px, #fff 28px); border: 1px solid #fff; }
.stroke { flex: 1; margin-left: 2px; border: 1px solid #ddd; }
.stroke i { width: 5px; height: 1px; margin-left: 3px; background: #111; }

.work { flex: 1; display: flex; min-height: 176px; border-bottom: 1px solid #ddd; }
.tools { width: 57px; border-right: 2px solid #999; }
.hgrip { display: block; height: 6px; margin: 5px 3px 2px 2px; border: solid #b0b0b0; border-width: 1px 0; background: #fff; }
.toolgrid { display: grid; grid-template-columns: 23px 23px; grid-auto-rows: 1fr; height: 164px; padding-left: 3px; }
.toolgrid button { position: relative; }
.toolgrid svg { width: 17px; height: 17px; }
.texttool { font: 700 19px/19px "Liberation Serif", serif; color: #111; }
.more::after { content: ""; position: absolute; right: 0; bottom: 0; border: 2px solid transparent; border-right-color: #1010d0; border-bottom-color: #1010d0; }
.mdi { flex: 1; display: flex; flex-direction: column; min-width: 0; }
.mdirow { flex: 1; display: flex; border-top: 2px solid #808080; margin-right: 2px; }
.book { flex: 397 1 0; display: flex; border-left: 5px solid #bcd2ec; border-right: 6px solid #bcd2ec; }
.sheet { position: relative; flex: 1; min-width: 0; height: 158px; overflow: hidden; background: #e0dfe5; border-left: 1px solid #777; display: flex; align-items: flex-end; }
table { flex: none; border-collapse: collapse; width: 224px; height: 162px; table-layout: fixed; font: 13px "Liberation Sans", Arial, sans-serif; }
th, td { padding: 0 5px 0 0; text-align: right; line-height: 14px; border: 1px solid #c4c4c4; background: #fff; }
th { width: 88px; font-weight: 400; background: #e0dfe5; border-color: #222; }
td:nth-child(2) { width: 68px; }
.meta td { background: #fbfbc8; }
.mark { position: absolute; left: 122px; top: 27px; width: 109px; height: 86px; border: 3px solid #ff2828; }
.pointer { position: absolute; left: 69px; top: 102px; width: 52px; height: 44px; }
.vscroll { width: 17px; flex: none; background: #f0f0f0; }
.inner { width: 19px; border-left: 1px solid #fff; }
.inner i { display: block; width: 15px; height: 52px; background: #cdcdcd; }
.desk { flex: 118 1 0; background: #ababab; border-left: 1px solid #111; box-shadow: -1px 0 #40c0e8; }
.outer { display: flex; flex-direction: column; align-items: center; width: 17px; }
.outer button { height: 18px; width: 15px; }
.outer svg, .hscroll svg { width: 10px; height: 10px; }
.outer i { width: 15px; height: 59px; margin: 28px 0 auto; background: #cdcdcd; }
.hscroll { display: flex; align-items: center; height: 17px; padding-right: 19px; border-top: 1px solid #fff; }
.hscroll button { width: 17px; height: 15px; }
.hscroll button:first-child { width: 24px; }
.hscroll i { flex: 1; height: 15px; background: #cdcdcd; }

.plots { position: relative; padding: 0 0 5px 16px; border-bottom: 2px solid #999; }
.plots .dd { color: #111; }
.plots .off { color: #aaa; }
.plot1 { width: 324px; }
.plot2 { width: 227px; }
.ghost { position: absolute; right: 18px; bottom: 1px; width: 106px; height: 8px; background: #f8f8f8; border-top: 1px solid #888; border-bottom: 1px solid #aaa; }
.command { display: flex; align-items: flex-start; gap: 4px; padding: 3px 5px 0 6px; height: 27px; overflow: hidden; }
.ctl button { width: 10px; height: 11px; margin-top: 2px; border: 1px solid #888; border-width: 0 1px 1px 0; }
.ctl svg { width: 7px; height: 7px; }
.ctl i { display: block; width: 8px; height: 8px; margin-top: 3px; border: 1px solid #aaa; border-width: 1px 1px 0 0; }
select { appearance: none; width: 70px; height: 18px; border: solid #777; border-width: 2px 0 0 2px; border-radius: 0; background: linear-gradient(90deg, #fff 52px, #f0f0f0 52px); }
.prompt { flex: 1; display: flex; height: 18px; background: #fff; border: solid #777; border-width: 2px 0 0 2px; padding-left: 4px; }
.prompt label { color: #1888f0; font-size: 15px; line-height: 15px; }
.prompt input { flex: 1; border: 0; padding: 0 4px; min-width: 0; outline: 0; background: none; }
```
